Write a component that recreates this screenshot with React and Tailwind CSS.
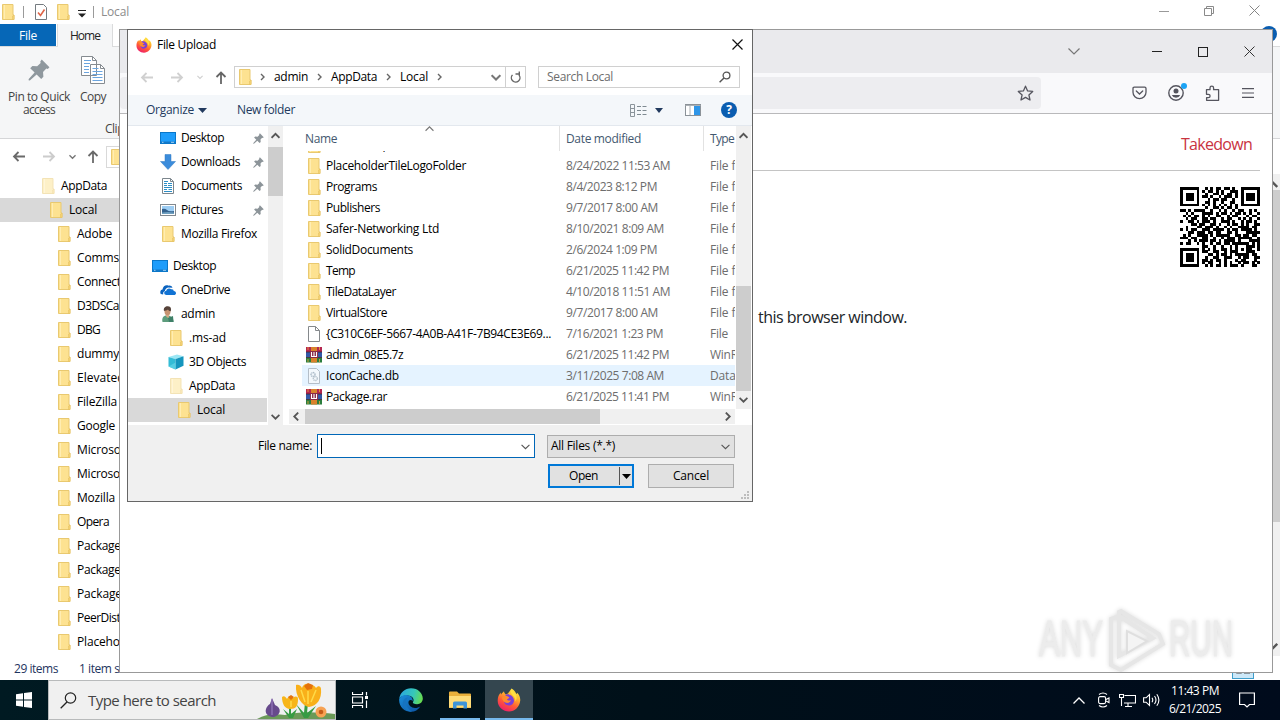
import React, { useLayoutEffect, useRef, useState } from "react";

// Single line of text whose tracking is computed so it spans `w` pixels.
function T({ w, className = "", children }) {
  const ref = useRef(null);
  const [ls, setLs] = useState(null);
  useLayoutEffect(() => {
    if (!w) return;
    const natural = ref.current.getBoundingClientRect().width;
    setLs((w - natural) / String(children).length);
  }, []);
  return (
    <span
      ref={ref}
      className={"inline-block shrink-0 whitespace-pre " + className}
      style={ls === null ? undefined : { letterSpacing: ls + "px" }}
    >
      {children}
    </span>
  );
}

const Folder = ({ faded }) => (
  <svg width="16" height="16" viewBox="0 0 16 16" className={"shrink-0 " + (faded ? "opacity-50" : "")}>
    <path d="M2.500.5h10.500v10.500h1v4.500h-11.500z" fill="#fde291" stroke="#e9c970" />
    <path d="M4.500 1v14" stroke="#ffedb2" />
    <path d="M12.500 15.500v-3.500l1.500-1v4.500z" fill="#f8d778" stroke="#e6c163" strokeWidth=".6" />
  </svg>
);
const Pin = ({ size = 12, color = "#8e979d" }) => (
  <svg width={size} height={size} viewBox="0 0 12 12" className="shrink-0">
    <path d="M7.500.3l4.200 4.200-.9.900-.8-.2-1.800 1.900.2 2.600-1.200 1.200L4.700 8.500 1 11.700.3 11.600l.1-.7L3.600 7.400 1.200 5l1.200-1.200 2.600.2 1.900-1.800-.2-.8z" fill={color} />
  </svg>
);
const Desktop = () => (
  <svg width="16" height="16" viewBox="0 0 16 16" className="shrink-0">
    <rect x=".5" y="2.500" width="15" height="11" fill="#1e9dfb" stroke="#0a77c9" />
    <path d="M1 11.500h14v1.500h-14z" fill="#1378c8" />
    <path d="M2 12.300h1.500M11 12.300h3" stroke="#c9e8ff" strokeWidth=".8" />
  </svg>
);
const Download = () => (
  <svg width="16" height="16" viewBox="0 0 16 16" className="shrink-0">
    <path d="M5 .5h6v7h4.500L8 15.500.5 7.500H5z" fill="#3b8cdb" stroke="#3078c0" strokeWidth=".5" />
  </svg>
);
const Documents = () => (
  <svg width="16" height="16" viewBox="0 0 16 16" className="shrink-0">
    <path d="M2.500.5h8l3 3v12h-11z" fill="#fff" stroke="#7c868d" />
    <path d="M10.500.5v3h3" fill="none" stroke="#7c868d" />
    <path d="M4 5.500h3M8 5.500h4M4 7.500h3M8 7.500h4M4 9.500h8M4 11.500h3M8.500 11.500h3.500M4 13.500h8M4 3.500h4" stroke="#2c8ec6" />
  </svg>
);
const Pictures = () => (
  <svg width="16" height="16" viewBox="0 0 16 16" className="shrink-0">
    <rect x=".5" y="2.500" width="15" height="11" fill="#fff" stroke="#82898f" />
    <rect x="2" y="4" width="12" height="8" fill="#9dcdf3" />
    <path d="M2 7q3-1 5 1t7 1v3H2z" fill="#34628e" />
    <path d="M2 10.500q6-1 12 0V12H2z" fill="#6fa0c0" />
  </svg>
);
const OneDrive = () => (
  <svg width="16" height="16" viewBox="0 0 16 16" className="shrink-0">
    <path d="M.5 11.500C-.3 8.500 1.500 7.500 2.500 7.500 3 4 6 2.500 8.500 3.700c1.500-.5 3.500.5 4 2L8 5.500C5.500 6.500 5 8 5 9c-1.800.5-2 2-1.700 3.300C2 12.500 1 12.500.5 11.500z" fill="#0b63bf" />
    <path d="M4.200 11c0-1.500 1-2 2-2 .2-2.500 3.300-3.500 5-1.700 1.500-.5 2.500.5 2.500 1.700 1.700 0 2.300 1.300 2.300 2.200S15 13 14 13H6.500c-1.300 0-2.300-.8-2.300-2z" fill="#1173d4" />
  </svg>
);
const Person = () => (
  <svg width="16" height="16" viewBox="0 0 16 16" className="shrink-0">
    <path d="M2.500 16c-1-4 1-6.500 4-6.500 4 0 7 1.500 7 6.500z" fill="#5d9c7c" />
    <path d="M8 12l5-2 .5 6H9z" fill="#3f8068" />
    <path d="M5.500 8h4l-1 4-2-1z" fill="#d7aa84" />
    <ellipse cx="7.500" cy="5.500" rx="3" ry="3.800" fill="#c69371" />
    <path d="M4 5C3 1.500 6 0 8 .3c3 .2 3.500 2.700 2.700 5C9.500 5 8.500 4.500 8 3.500 6.500 4.700 5 4.500 4 5z" fill="#56433a" />
  </svg>
);
const Cube = () => (
  <svg width="16" height="16" viewBox="0 0 16 16" className="shrink-0">
    <path d="M.5 3L9 .5l6.500 1.800L7.500 5z" fill="#9be7f5" />
    <path d="M.5 3l7 2v10.500l-7-3z" fill="#33bcd6" />
    <path d="M7.500 5l8-2.700v9.500l-8 3.700z" fill="#1595bd" />
    <path d="M.5 12.500l7-4v7z" fill="#63d5e8" opacity=".7" />
  </svg>
);
const BlankFile = () => (
  <svg width="16" height="16" viewBox="0 0 16 16" className="shrink-0">
    <path d="M2.500.5h7l4 4v11h-11z" fill="#fff" stroke="#85898c" />
    <path d="M9.500.5v4h4" fill="none" stroke="#85898c" />
  </svg>
);
const DbFile = () => (
  <svg width="16" height="16" viewBox="0 0 16 16" className="shrink-0">
    <path d="M2.500.5h8l3 3v12h-11z" fill="#f3f8fc" stroke="#b4bec8" />
    <circle cx="7" cy="6.500" r="2" fill="none" stroke="#adbcc9" strokeDasharray="1.200 .5" strokeWidth="1.400" />
    <circle cx="9.300" cy="10.500" r="2" fill="none" stroke="#b8c4ce" strokeDasharray="1.200 .5" strokeWidth="1.400" />
  </svg>
);
const Rar = () => (
  <svg width="16" height="16" viewBox="0 0 16 16" className="shrink-0">
    <rect y="0" width="16" height="5" fill="#b42650" />
    <rect y="5" width="16" height="5.500" fill="#3358a8" />
    <rect y="10.500" width="16" height="5" fill="#2b7d3d" />
    <path d="M0 5h16M0 10.500h16" stroke="#40252d" strokeWidth=".8" />
    <rect x="5" width="6" height="15.500" fill="#d9822c" />
    <rect x="4" y="4" width="8" height="7" fill="#8a2a48" />
    <path d="M5.500 5v4.500h5V5M8 5v4" fill="none" stroke="#fff" strokeWidth="1.100" />
    <path d="M2 0v3M13.500 0v3M2 12v3M13.500 12v3" stroke="#f4a638" strokeWidth=".8" />
  </svg>
);
const Firefox = ({ size, id }) => (
  <svg width={size} height={size} viewBox="0 0 24 24" className="shrink-0">
    <defs>
      <linearGradient id={id} x1=".8" y1="0" x2=".3" y2="1">
        <stop offset="0" stopColor="#fff04a" />
        <stop offset=".35" stopColor="#ffb02b" />
        <stop offset=".65" stopColor="#ff5a36" />
        <stop offset="1" stopColor="#ee1d6c" />
      </linearGradient>
    </defs>
    <path d="M14.500.5c3.500 2 4 4 5 5.500.5-.3.600-.6.600-1.200C22.500 7 23.500 10 23.200 12.800 22.600 19 17.800 23.500 12 23.500S.8 19 .7 13C.6 9.500 1.700 6.700 3.700 4.500c0 1 .1 1.500.4 2C4.800 5 6.200 4 7 3.200c.1 1.500.8 2.300 1.800 3 2.500-.3 3.500-2.700 5.700-5.700z" fill={`url(#${id})`} />
    <path d="M8 7c4-2 9 1 9 5.500 0 3-2.500 5-5.200 5-3 0-5.300-2.200-4.800-5.200.3-1 1.800-1.300 3.300-1 .8-1 2-1.200 2-1.800C11 8 9.800 8.700 8 7z" fill="#7a3fd8" />
    <path d="M5 9.500c1-1.500 3-1.500 4-.5l3 .3c-.5 1.200-2 1.300-2 2.200.7 1.500 2.500 1 4 .8-1 2-3 3-5 2.500C6.500 14 5 12 5 9.500z" fill="#ff8b2c" />
    <path d="M14 1.500c-2 5 5 6 4.500 12 3-5 0-9-4.500-12z" fill="#ffdf43" />
  </svg>
);
const Arrow = ({ dir, color = "#6a6a6a" }) => {
  const d = { left: "M13 7.500H2M6.500 3L2 7.500 6.500 12", right: "M1 7.500h11M7.500 3l4.500 4.500L7.500 12", up: "M7 14V2.500M2.500 7L7 2.500 11.500 7" }[dir];
  return (
    <svg width="14" height="15" viewBox="0 0 14 15" className="shrink-0">
      <path d={d} fill="none" stroke={color} strokeWidth="1.800" />
    </svg>
  );
};
const Chevron = ({ dir = "down", size = 8, color = "#555", sw = 1.6 }) => {
  const d = { down: "M.5 2.500L4 6l3.500-3.500", up: "M.5 6L4 2.500 7.500 6", left: "M5.500.5L2 4l3.500 3.500", right: "M2.500.5L6 4 2.500 7.500" }[dir];
  return (
    <svg width={size} height={size} viewBox="0 0 8 8" className="shrink-0">
      <path d={d} fill="none" stroke={color} strokeWidth={sw} />
    </svg>
  );
};
const Crumb = () => (
  <svg width="5" height="8" viewBox="0 0 5 8" className="shrink-0">
    <path d="M1 1l3 3-3 3" fill="none" stroke="#666" strokeWidth="1.400" />
  </svg>
);
const Caret = ({ color = "#223a5e" }) => (
  <svg width="9" height="5" viewBox="0 0 9 5" className="shrink-0">
    <path d="M0 0h9L4.500 5z" fill={color} />
  </svg>
);
const Cross = ({ size = 11, color = "#222", sw = 1 }) => (
  <svg width={size} height={size} viewBox="0 0 11 11" className="shrink-0">
    <path d="M.5.5l10 10M10.500.5l-10 10" stroke={color} strokeWidth={sw} />
  </svg>
);

/* ---------- Explorer window ---------- */
const explorerItems = [
  ["Adobe", 35], ["Comms", 42], ["ConnectedDevices", 97], ["D3DSCache", 60], ["DBG", 23],
  ["dummy", 42], ["ElevatedDiagnostics", 112], ["FileZilla", 40], ["Google", 38], ["Microsoft", 52],
  ["Microsoft Help", 79], ["Mozilla", 38], ["Opera", 32], ["Packages", 49], ["Package Cache", 79], ["Package Store", 77],
  ["PeerDistRepub", 77], ["PlaceholderTile", 83],
];

function Explorer() {
  return (
    <section className="flex h-[680px] w-full flex-col bg-white">
      <header className="flex h-6 shrink-0 items-center pr-[20px]">
        <span className="flex w-[23px] items-center"><Folder /></span>
        <span className="h-3 w-px bg-[#9a9a9a]" />
        <svg width="14" height="16" viewBox="0 0 14 16" className="ml-[10px]">
          <path d="M1.500.5h8l3 3v12h-11z" fill="#fff" stroke="#747b80" />
          <path d="M4 8.500l2.500 3 4-6" fill="none" stroke="#df6548" strokeWidth="1.600" />
        </svg>
        <span className="ml-[7px]"><Folder /></span>
        <svg width="8" height="8" viewBox="0 0 8 8" className="ml-[7px] mt-[3px]">
          <path d="M0 .5h8" stroke="#222" />
          <path d="M0 3.500h8L4 7.500z" fill="#222" />
        </svg>
        <span className="ml-[7px] h-3 w-px bg-[#9a9a9a]" />
        <span className="ml-[7px] text-[#8c8c8c]"><T w={28}>Local</T></span>
        <div className="ml-auto flex items-center gap-[35px] pb-[3px]">
          <span className="mt-px h-px w-[10px] bg-[#999]" />
          <svg width="10" height="10" viewBox="0 0 10 10">
            <path d="M.5 2.500h7v7h-7zM2.500 2.500v-2h7v7h-2" fill="none" stroke="#8a8a8a" />
          </svg>
          <Cross color="#858585" />
        </div>
      </header>
      <nav className="flex h-[23px] shrink-0 border-b border-[#dadbdc] bg-white">
        <div className="flex h-[22px] w-14 items-center justify-center bg-[#0667b7] pt-px text-white"><T w={18}>File</T></div>
        <div className="ml-px flex h-[23px] w-[56px] items-center justify-center border-x border-[#dadbdc] bg-[#f5f6f7] text-[#222]"><T w={30}>Home</T></div>
      </nav>
      <div className="flex h-[92px] shrink-0 border-b border-[#d5d6d8] bg-[#f5f6f7] text-[#444]">
        <div className="flex w-[78px] flex-col items-center pt-[12px]">
          <Pin size={22} color="#8f989e" />
          <span className="mt-[9px] h-[13px] leading-[13px]"><T w={62}>Pin to Quick</T></span>
          <span className="h-[13px] leading-[13px]"><T w={32}>access</T></span>
        </div>
        <div className="flex w-[30px] flex-col items-center pt-[8px]">
          <svg width="26" height="30" viewBox="0 0 26 30">
            <path d="M1.500 1.500h11l4 4v15h-15zM10.500 9.500h10l4 4v15h-14z" fill="#fff" stroke="#858b90" />
            <path d="M12.500 1.500v4h4M20.500 9.500v4h4" fill="none" stroke="#858b90" />
            <path d="M4 5.500h7M4 8.500h6M4 11.500h5M4 14.500h5M4 17.500h5M12.500 13.500h6M12.500 16.500h10M12.500 19.500h10M12.500 22.500h10M12.500 25.500h10" stroke="#6ba5df" />
          </svg>
          <span className="mt-[5px] h-[13px] leading-[13px]"><T w={26}>Copy</T></span>
        </div>
        <div className="-ml-1 flex items-end pb-px pl-px"><T w={50}>Clipboard</T></div>
      </div>
      <div className="flex h-[35px] shrink-0 items-center pl-[12px]">
        <Arrow dir="left" />
        <span className="ml-[16px] flex"><Arrow dir="right" color="#ccc" /></span>
        <span className="ml-[13px] flex"><Chevron size={7} color="#777" /></span>
        <span className="ml-[10px] flex"><Arrow dir="up" /></span>
        <div className="ml-[6px] flex h-[22px] w-[900px] items-center border border-[#d9d9d9] pl-[2px]"><Folder /></div>
      </div>
      <div className="flex h-[482px] shrink-0 justify-between">
        <div className="w-[300px]">
          <div className="flex h-6 items-center gap-[5px] pl-10"><Folder faded /><T w={46}>AppData</T></div>
          <div className="flex h-6 items-center gap-[5px] bg-[#d9d9d9] pl-12"><Folder /><T w={28}>Local</T></div>
          {explorerItems.map(([n, w]) => (
            <div key={n} className="flex h-6 items-center gap-[5px] pl-14"><Folder /><T w={w}>{n}</T></div>
          ))}
        </div>
        <div className="flex w-[17px] flex-col items-center justify-between bg-[#f0f0f0] py-[4px]">
          <Chevron dir="up" size={12} />
          <div className="mb-auto h-[332px] w-[17px] bg-[#cdcdcd]" />
          <Chevron size={12} />
        </div>
      </div>
      <footer className="flex h-6 shrink-0 items-center justify-between pl-[14px] pr-[26px] text-[#1e3460]">
        <span className="flex gap-[21px] pt-[2px]"><T w={44}>29 items</T><T w={78}>1 item selected</T></span>
        <span className="flex h-[22px] w-[22px] items-center justify-center border border-[#3f9ecb] bg-[#cce8f8]">
          <svg width="14" height="14" viewBox="0 0 14 14"><path d="M.5.500h5v12h-5zM8 3.500h6M8 12.500h6" fill="#fff" stroke="#8a979f" /></svg>
        </span>
      </footer>
    </section>
  );
}

/* ---------- Browser window ---------- */
const qr = [
  "11111110010101101101001111111",
  "10000010101101010011101000001",
  "10111010010011010110101011101",
  "10111010110100101110101011101",
  "10111010001011011001001011101",
  "10000010011010010011001000001",
  "11111110101010101010101111111",
  "00000000010011010110100000000",
  "11010111100100101001011001010",
  "00101000111101011010110101001",
  "01010110101001100101100010110",
  "00101100110110010110010101001",
  "10011010111010011101001011010",
  "00001101100110100101101010011",
  "00100011011101001010011110110",
  "10101100111011110101101111010",
  "00011011101101100110100011111",
  "01010011110101111100110110110",
  "11101100110010010111011111001",
  "00010101110110101111010001111",
  "10110010100101101101111110101",
  "00000000110010010010100011101",
  "11111110101010011010101011001",
  "10000010110011001011100011100",
  "10111010001101011010111110110",
  "10111010010011001110010110011",
  "10111010110101101000101100010",
  "10000010101100101010010110101",
  "11111110010101101011101000110",
];

function Browser() {
  return (
    <section className="absolute left-[119px] top-[29px] flex h-[644px] w-[1154px] flex-col overflow-hidden border border-[#999] bg-white">
      <div className="flex h-[43px] shrink-0 items-center justify-end bg-[#eaeaed] pr-[17px]">
        <svg width="12" height="7" viewBox="0 0 12 7" className="mr-[72px]"><path d="M.5.5L6 6 11.500.5" fill="none" stroke="#777" strokeWidth="1.200" /></svg>
        <div className="flex items-center gap-[36px]">
          <span className="h-px w-[10px] bg-[#222]" />
          <span className="h-[10px] w-[10px] border border-[#222]" />
          <Cross color="#333" size={11} />
        </div>
      </div>
      <div className="flex h-[41px] shrink-0 items-center border-b border-[#b9b9bb] bg-[#f9f9fb] pr-[18px]">
        <div className="flex h-[32px] w-[921px] items-center justify-end rounded bg-[#ededf0] pr-[7px]">
          <svg width="17" height="17" viewBox="0 0 17 17"><path d="M8.500 1.200l2.100 4.700 5.100.5-3.800 3.500 1.100 5.100-4.500-2.600L4 15l1.100-5.100L1.300 6.400l5.100-.5z" fill="none" stroke="#55555e" strokeWidth="1.300" strokeLinejoin="round" /></svg>
        </div>
        <div className="ml-auto flex items-center">
          <svg width="15" height="14" viewBox="0 0 15 14"><path d="M1 2.500Q1 1.200 2.300 1.200h10.400Q14 1.200 14 2.500v3.700a6.500 6.500 0 0 1-13 0zM4.300 5l3.200 3 3.200-3" fill="none" stroke="#55555e" strokeWidth="1.300" strokeLinecap="round" /></svg>
          <svg width="20" height="20" viewBox="0 0 20 20" className="mb-[2px] ml-[20px]">
            <circle cx="9" cy="11" r="7.200" fill="none" stroke="#55555e" strokeWidth="1.400" />
            <circle cx="9" cy="9" r="2.500" fill="#55555e" />
            <path d="M4.800 13h8.400q-1.200 2.800-4.200 2.800T4.800 13z" fill="#55555e" />
            <circle cx="17" cy="4" r="3" fill="#1ba3f5" />
          </svg>
          <svg width="15" height="17" viewBox="0 0 15 17" className="ml-[18px]"><path d="M1.500 7V4.700H5V3a1.800 1.800 0 0 1 3.600 0v1.700h5V15.300h-12V12.700h1.800a1.700 1.700 0 0 0 0-3.400H1.500z" fill="none" stroke="#55555e" strokeWidth="1.300" strokeLinejoin="round" /></svg>
          <svg width="12" height="10" viewBox="0 0 12 10" className="ml-[22px]"><path d="M0 .7h12M0 5h12M0 9.300h12" stroke="#55555e" strokeWidth="1.200" /></svg>
        </div>
      </div>
      <main className="flex min-h-0 flex-1 flex-col pl-4 pr-[12px] text-[16px]">
        <div className="flex h-[57px] shrink-0 items-center justify-end border-b border-[#c4c4c4] pr-[8px] pt-[3px] text-[#c9333f]"><T w={71}>Takedown</T></div>
        <div className="flex shrink-0 justify-end pt-[16px]">
          <svg width="80" height="80" viewBox="0 0 29 29" shapeRendering="crispEdges">
            {qr.map((row, y) => [...row].map((c, x) => (c === "1" ? <rect key={x + "-" + y} x={x} y={y} width="1.020" height="1.020" fill="#000" /> : null)))}
          </svg>
        </div>
        <div className="mt-[42px] h-4 shrink-0 pl-[622px] text-[#212529]"><T w={149}>this browser window.</T></div>
        <svg width="200" height="66" viewBox="0 0 200 66" className="ml-auto mr-[25px] mt-[282px] shrink-0 drop-shadow-[0_0_2px_rgba(0,0,0,0.14)]">
          <g fill="#ececec" stroke="#ececec" fontFamily="'Liberation Sans', Arial, sans-serif" fontSize="50">
            <text x="4" y="49" textLength="64" lengthAdjust="spacingAndGlyphs">ANY</text>
            <text x="134" y="49" textLength="64" lengthAdjust="spacingAndGlyphs">RUN</text>
          </g>
          <path d="M76 12v46l10 5 42-26-4-10L86 4l-2 1v44l34-18-34-22z" fill="none" stroke="#e6e6e6" strokeWidth="4" />
          <path d="M92 24v22l20-12z" fill="#f4f4f4" stroke="#dfdfdf" strokeWidth="2" />
        </svg>
      </main>
    </section>
  );
}

/* ---------- File dialog ---------- */
const tree = [
  [32, Desktop, "Desktop", 43, true], [32, Download, "Downloads", 59, true], [32, Documents, "Documents", 61, true],
  [32, Pictures, "Pictures", 42, true], [32, Folder, "Mozilla Firefox", 76], null,
  [24, Desktop, "Desktop", 43], [32, OneDrive, "OneDrive", 49], [32, Person, "admin", 34],
  [40, Folder, ".ms-ad", 37], [40, Cube, "3D Objects", 57], [40, "faded", "AppData", 46], [48, Folder, "Local", 28, false, true],
];
const files = [
  [Folder, "PeerDistRepub", 77, "8/24/2022 11:53 AM", 104, "File folder", 54],
  [Folder, "PlaceholderTileLogoFolder", 140, "8/24/2022 11:53 AM", 104, "File folder", 54],
  [Folder, "Programs", 51, "8/4/2023 8:12 PM", 91, "File folder", 54],
  [Folder, "Publishers", 54, "9/7/2017 8:00 AM", 92, "File folder", 54],
  [Folder, "Safer-Networking Ltd", 113, "8/10/2021 8:09 AM", 98, "File folder", 54],
  [Folder, "SolidDocuments", 87, "2/6/2024 1:09 PM", 91, "File folder", 54],
  [Folder, "Temp", 29, "6/21/2025 11:42 PM", 103, "File folder", 54],
  [Folder, "TileDataLayer", 70, "4/10/2018 11:51 AM", 104, "File folder", 54],
  [Folder, "VirtualStore", 61, "9/7/2017 8:00 AM", 92, "File folder", 54],
  [BlankFile, "{C310C6EF-5667-4A0B-A41F-7B94CE3E69...", 225, "7/16/2021 1:23 PM", 97, "File", 18],
  [Rar, "admin_08E5.7z", 77, "6/21/2025 11:42 PM", 103, "WinRAR archive", 84],
  [DbFile, "IconCache.db", 73, "3/11/2025 7:08 AM", 98, "Data Base File", 76],
  [Rar, "Package.rar", 61, "6/21/2025 11:41 PM", 103, "WinRAR archive", 84],
];

function Dialog() {
  return (
    <section className="absolute left-[127px] top-[29px] flex h-[473px] w-[626px] flex-col overflow-hidden border border-[#666] bg-white">
      <header className="flex h-[29px] items-center pl-2 pr-[9px]">
        <Firefox size={16} id="ffDialog" />
        <span className="ml-[5px]"><T w={59}>File Upload</T></span>
        <span className="ml-auto"><Cross size={11} color="#111" sw={1.2} /></span>
      </header>
      <div className="flex h-[36px] items-center pl-[12px]">
        <Arrow dir="left" color="#d0d0d0" />
        <span className="ml-[16px] flex"><Arrow dir="right" color="#d0d0d0" /></span>
        <span className="ml-[13px] flex"><Chevron size={6} color="#d0d0d0" /></span>
        <span className="ml-[11px] flex"><Arrow dir="up" color="#666" /></span>
        <div className="ml-[6px] flex h-[22px] w-[292px] items-center border border-[#d0d0d0] pl-[2px]">
          <Folder />
          <span className="ml-[7px] mr-[9px] flex"><Crumb /></span><T w={34}>admin</T>
          <span className="ml-[9px] mr-[9px] flex"><Crumb /></span><T w={46}>AppData</T>
          <span className="ml-[9px] mr-[9px] flex"><Crumb /></span><T w={28}>Local</T>
          <span className="ml-[9px] flex"><Crumb /></span>
          <span className="ml-auto mr-[4px] flex"><Chevron size={10} color="#777" /></span>
          <span className="flex h-full w-[20px] items-center justify-center border-l border-[#d0d0d0]">
            <svg width="11" height="12" viewBox="0 0 11 12"><path d="M9 3.600A4.300 4.300 0 1 1 2.500 3.400M5.500 2.500h4M9.300 0v4" fill="none" stroke="#666" strokeWidth="1.400" transform="translate(0 .5)" /></svg>
          </span>
        </div>
        <div className="ml-[12px] flex h-[22px] w-[202px] items-center justify-between border border-[#d0d0d0] px-[8px] text-[#6d6d6d]">
          <T w={66}>Search Local</T>
          <svg width="12" height="12" viewBox="0 0 12 12"><circle cx="7.500" cy="4.500" r="3.400" fill="none" stroke="#555" strokeWidth="1.300" /><path d="M5 7L.6 11.300" stroke="#555" strokeWidth="1.500" /></svg>
        </div>
      </div>
      <div className="flex h-[31px] items-center border-b border-[#e3e8ee] bg-[#f4f7fa] pl-[18px] pr-[15px] text-[#223a5e]">
        <T w={48}>Organize</T>
        <span className="ml-[4px] flex"><Caret /></span>
        <span className="ml-[30px]"><T w={58}>New folder</T></span>
        <svg width="17" height="13" viewBox="0 0 17 13" className="ml-auto">
          <path d="M.5.5h4v12h-4zM.5 4.500h4M.5 8.500h4" fill="none" stroke="#8b949b" />
          <path d="M7 2.500h4M12.500 2.500h4M7 6.500h4M12.500 6.500h4M7 10.500h4M12.500 10.500h4" stroke="#7e8990" />
        </svg>
        <span className="ml-[8px] flex"><svg width="8" height="5" viewBox="0 0 8 5"><path d="M0 0h8L4 5z" fill="#223a5e" /></svg></span>
        <svg width="16" height="12" viewBox="0 0 16 12" className="ml-[22px]">
          <rect x=".5" y=".5" width="15" height="11" fill="#fff" stroke="#8b9298" />
          <path d="M.5 1.500h15M5 1v10" stroke="#aab0b5" /><rect x="9" y="2" width="6" height="9" fill="#2f96e8" />
        </svg>
        <span className="ml-[20px] flex h-4 w-4 items-center justify-center rounded-full bg-[#0a5db0] text-[12px] font-bold leading-none text-white">?</span>
      </div>
      <div className="flex h-[299px]">
        <aside className="flex w-[156px]">
          <div className="w-[139px] overflow-hidden">
            {tree.map((r, i) => {
              if (!r) return <div key={i} className="h-2" />;
              const [indent, Icon, label, w, pinned, sel] = r;
              return (
                <div key={i} className={"flex h-6 items-center " + (sel ? "bg-[#d9d9d9]" : "")}>
                  <span className={indent === 24 ? "w-6 shrink-0" : indent === 32 ? "w-8 shrink-0" : indent === 40 ? "w-10 shrink-0" : "w-12 shrink-0"} />
                  {Icon === "faded" ? <Folder faded /> : <Icon />}
                  <span className="ml-[5px]"><T w={w}>{label}</T></span>
                  {pinned && <span className="ml-auto mr-[3px] flex"><Pin size={11} color="#8c9499" /></span>}
                </div>
              );
            })}
          </div>
          <div className="ml-px flex w-[15px] flex-col items-center bg-[#f0f0f0] pb-[4px] pt-[5px]">
            <Chevron dir="up" size={9} />
            <div className="mt-[7px] h-[49px] w-[15px] bg-[#cdcdcd]" />
            <span className="mt-auto flex"><Chevron size={9} /></span>
          </div>
        </aside>
        <div className="flex w-[468px] flex-col pl-[5px]">
          <div className="flex h-[283px]">
            <div className="flex w-[446px] shrink-0 flex-col overflow-hidden">
              <div className="flex h-[25px] shrink-0 text-[#43586f]">
                <div className="relative flex w-[271px] shrink-0 items-center border-r border-[#e2e2e2] pl-[16px] pt-px">
                  <T w={32}>Name</T>
                  <span className="absolute left-[136px] top-[-2px] flex"><Chevron dir="up" size={9} color="#777" sw={1} /></span>
                </div>
                <div className="flex w-[144px] shrink-0 items-center border-r border-[#e2e2e2] pl-[6px] pt-px"><T w={75}>Date modified</T></div>
                <div className="flex items-center pl-[6px] pt-px"><T w={24}>Type</T></div>
              </div>
              <div className="flex-1 overflow-hidden">
                <div className="-mt-[17px]">
                  {files.map(([Icon, n, nw, d, dw, t, tw], i) => (
                    <div key={i} className={"ml-[13px] flex h-[21px] items-center " + (i === 11 ? "bg-[#e5f3ff]" : "")}>
                      <span className="ml-[4px] flex w-[20px] shrink-0"><Icon /></span>
                      <span className="w-[240px] shrink-0"><T w={nw}>{n}</T></span>
                      <span className="w-[144px] shrink-0 text-[#6d6d6d]"><T w={dw}>{d}</T></span>
                      <span className="shrink-0 text-[#6d6d6d]"><T w={tw}>{t}</T></span>
                    </div>
                  ))}
                </div>
              </div>
            </div>
            <div className="ml-px flex w-[15px] flex-col items-center bg-[#f0f0f0] pb-[5px] pt-[5px]">
              <Chevron dir="up" size={9} />
              <div className="mt-[146px] h-[105px] w-[15px] shrink-0 bg-[#cdcdcd]" />
              <span className="mt-auto flex"><Chevron size={9} /></span>
            </div>
          </div>
          <div className="flex h-[15px] w-[446px] items-center justify-between bg-[#f0f0f0] px-[3px]">
            <Chevron dir="left" size={9} />
            <div className="ml-[4px] mr-auto h-[15px] w-[295px] bg-[#cdcdcd]" />
            <Chevron dir="right" size={9} />
          </div>
        </div>
      </div>
      <footer className="flex flex-1 flex-col bg-[#f0f0f0] pt-[9px]">
        <div className="flex h-6 items-center pl-[130px]">
          <T w={54}>File name:</T>
          <div className="ml-[5px] flex h-6 w-[218px] items-center justify-between border border-[#0067b8] bg-white pl-[3px] pr-[4px]">
            <span className="h-4 w-px bg-black" /><Chevron size={9} sw={1} />
          </div>
          <div className="ml-[12px] flex h-[23px] w-[188px] items-center justify-between border border-[#adadad] bg-[#e1e1e1] pl-[3px] pr-[4px]">
            <T w={64}>All Files (*.*)</T><Chevron size={9} sw={1} />
          </div>
        </div>
        <div className="mt-[6px] flex h-6 pl-[420px]">
          <div className="flex w-[86px] items-center border-2 border-[#0078d7] bg-[#e1e1e1]">
            <span className="flex flex-1 justify-center pr-[2px]"><T w={29}>Open</T></span>
            <span className="h-[18px] w-px bg-[#555]" />
            <span className="flex w-[12px] justify-center"><Caret color="#000" /></span>
          </div>
          <div className="ml-[14px] flex w-[86px] items-center justify-center border border-[#adadad] bg-[#e1e1e1]"><T w={36}>Cancel</T></div>
        </div>
        <svg width="9" height="9" viewBox="0 0 9 9" className="ml-auto mr-[2px] mt-[3px]"><path d="M6 0h2v2H6zM3 3h2v2H3zM6 3h2v2H6zM0 6h2v2H0zM3 6h2v2H3zM6 6h2v2H6z" fill="#bdbdbd" /></svg>
      </footer>
    </section>
  );
}

/* ---------- Taskbar ---------- */
function Taskbar() {
  return (
    <footer className="flex h-10 bg-gradient-to-r from-[#001a22] via-[#001019] to-[#000b1c] text-white">
      <div className="flex w-12 items-center justify-center">
        <svg width="16" height="16" viewBox="0 0 16 16"><path d="M0 2.300l7-1v6.200H0zM8 1.100L16 0v7.500H8zM0 8.500h7v6.200l-7-1zM8 8.500h8V16l-8-1.100z" fill="#fff" /></svg>
      </div>
      <div className="flex w-[288px] items-center border border-[#b8babb] bg-[#f0f0f0] pl-[11px]">
        <svg width="17" height="17" viewBox="0 0 17 17"><circle cx="10.500" cy="6" r="5.200" fill="none" stroke="#222" strokeWidth="1.200" /><path d="M7 10L.7 16.300" stroke="#222" strokeWidth="1.300" /></svg>
        <span className="ml-[11px] text-[15px] text-[#444]"><T w={128}>Type here to search</T></span>
        <svg width="80" height="38" viewBox="0 0 80 38" className="ml-auto shrink-0">
          <path d="M2 38C12 32 22 33 30 34 44 30 62 31 80 33v5z" fill="#6b9a58" />
          <path d="M17 36c-9-2-7-10-2-13l2-6 3 7c7 3 6 10-1 12z" fill="#674a8c" />
          <path d="M17 18v16" stroke="#9175b8" strokeWidth="1.300" />
          <path d="M34 37l-6-9 6 5v-7h2v7l6-5-4 9zM49 37l-8-14 8 9 1-11 3 1-1 10 9-7-8 12z" fill="#379b43" />
          <path d="M27 16c2-2 4 0 5 2 1-3 4-4 6-1 2-2 5-2 5 1 0 7-2 10-8 10-5 0-8-5-8-12z" fill="#f7b519" />
          <path d="M41 4c3-1 5 1 6 3 1-4 6-6 8-2 3-2 5 0 6 2 2-3 5-2 5 1 1 10-4 17-12 18-7-1-14-11-13-22z" fill="#f9b01a" />
          <path d="M49 5l4-3 5 2-1 4-5 1zM33 16l3-2 3 2-3 3z" fill="#e5720b" />
          <path d="M53 10v13M46 9l4 12M61 9l-5 12M36 20v6" stroke="#ffda48" strokeWidth="1.500" fill="none" />
          <circle cx="66" cy="31" r="5.500" fill="#f7a253" /><circle cx="66" cy="31" r="2.300" fill="#c55d18" />
        </svg>
      </div>
      <div className="flex w-[48px] items-center justify-center">
        <svg width="16" height="16" viewBox="0 0 16 16"><path d="M.5 0v2.500h10V0M.5 16v-2.500h10V16M.5 5h10v6H.5zM14.500 0v3.500M14.500 8.500V16" fill="none" stroke="#fff" strokeWidth="1.200" /><rect x="13" y="4" width="3" height="3" fill="#fff" /></svg>
      </div>
      <div className="ml-[3px] flex w-[48px] items-center justify-center">
        <svg width="24" height="24" viewBox="0 0 24 24">
          <defs>
            <linearGradient id="edgeTop" x1="0" y1=".3" x2="1" y2=".5"><stop offset="0" stopColor="#2aa6e0" /><stop offset=".6" stopColor="#36c7b9" /><stop offset="1" stopColor="#67dc50" /></linearGradient>
            <linearGradient id="edgeLow" x1="0" y1="0" x2="1" y2="1"><stop offset="0" stopColor="#1b8fdc" /><stop offset="1" stopColor="#0b4f9e" /></linearGradient>
          </defs>
          <path d="M.2 11C1 4.500 6 .2 12 .2c7 0 11.800 5 11.800 10.300 0 3.500-2.600 5.700-5.700 5.700-3 0-4.600-1.200-4.200-2 1.600-2 .6-6-4-6.500C5.500 7.200 2 8 .2 11z" fill="url(#edgeTop)" />
          <path d="M.2 11C2 7 7 6.200 10.500 7.800c3 1.500 3.500 4 3 5.500-.8-1.500-2.600-1.500-3.500-.5-1.800 2.500 1 7.200 6 7.200 2.200 0 4-.7 5.300-1.500C19 22 16 23.800 12 23.800 5 23.800-.5 18 .2 11z" fill="url(#edgeLow)" />
          <path d="M9 9.500C5.500 13 7 20.500 13 23.700 6 23.500 2 18 4.500 12.500 5.500 10.500 7 9.500 9 9.500z" fill="#1673c0" />
        </svg>
      </div>
      <div className="ml-[5px] flex w-10 flex-col items-center justify-between pt-[11px]">
        <svg width="22" height="18" viewBox="0 0 22 18">
          <path d="M0 1.500Q0 .5 1 .5h7l2 2h11q1 0 1 1V17H0z" fill="#eab03b" />
          <path d="M0 5h22v11.500H0z" fill="#ffdc78" />
          <path d="M4 17.500V12q0-1.500 1.500-1.500h11Q18 10.500 18 12v5.500h-3.500v-3h-7v3z" fill="#3d94d9" />
        </svg>
        <span className="h-[2px] w-10 bg-[#76b9ed]" />
      </div>
      <div className="ml-[5px] flex w-12 flex-col items-center justify-between bg-[#34464f] pt-[8px]">
        <Firefox size={24} id="ffTask" />
        <span className="h-[2px] w-12 bg-[#76b9ed]" />
      </div>
      <div className="ml-auto flex items-center pr-[25px]">
        <svg width="12" height="7" viewBox="0 0 12 7"><path d="M.5 6.500L6 1l5.500 5.500" fill="none" stroke="#fff" strokeWidth="1.300" /></svg>
        <svg width="12" height="16" viewBox="0 0 12 16" className="ml-[13px]"><rect x=".6" y="4.600" width="7" height="7" rx="1.500" fill="none" stroke="#fff" strokeWidth="1.100" /><path d="M8 7.500l3-1.500v4.500L8 9M1 2.500Q5 -.5 9 2.500M1 13.500q4 3 8 0" fill="none" stroke="#fff" strokeWidth="1.100" /></svg>
        <svg width="17" height="14" viewBox="0 0 17 14" className="ml-[9px]"><path d="M5.500 2.500h11v7.500H5M9 10v3M6 13.500h7M.5 1.500h4v3h-4zM2.500 4.500V13" fill="none" stroke="#fff" strokeWidth="1.100" /></svg>
        <svg width="17" height="14" viewBox="0 0 17 14" className="ml-[7px]"><path d="M.6 4.800h2.500L6.500 1.500v11L3.100 9.200H.6zM9 4.800q1.500 2.200 0 4.400M11.500 3q3 4 0 8M13.800 1.200q4.200 5.800 0 11.600" fill="none" stroke="#fff" strokeWidth="1.100" /></svg>
        <div className="ml-[9px] flex w-[52px] flex-col items-center leading-[18px]"><T w={48}>11:43 PM</T><T w={52}>6/21/2025</T></div>
        <svg width="16" height="16" viewBox="0 0 16 16" className="ml-[18px]"><path d="M.6 1h14.800v11.500H10.500L8 15l-2.500-2.500H.6z" fill="none" stroke="#fff" strokeWidth="1.200" /></svg>
      </div>
    </footer>
  );
}

export default function App() {
  return (
    <div className="relative h-[720px] w-[1280px] overflow-hidden bg-white font-['Open_Sans','Noto_Sans',sans-serif] text-[12px] leading-[16px] text-black">
      <Explorer />
      <span className="absolute left-[1261px] top-[26px] h-4 w-4 rounded-full bg-[#0a5db0]" />
      <Browser />
      <Dialog />
      <Taskbar />
    </div>
  );
}
